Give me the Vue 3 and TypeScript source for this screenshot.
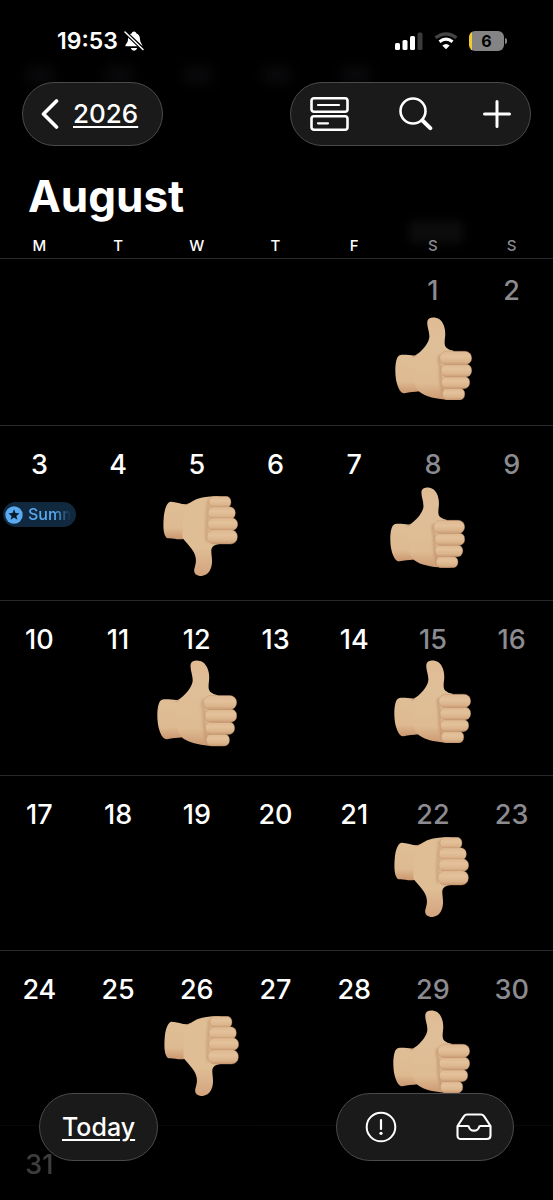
<script setup lang="ts">
interface Sticker {
  kind: 'up' | 'down'
  left: number
  top: number
  width: number
}

interface Day {
  date: number
  weekend: boolean
  event?: string
  sticker?: Sticker
}

const weekdays = ['M', 'T', 'W', 'T', 'F', 'S', 'S']

// Stickers are dropped freely on a day; offsets are relative to its cell.
const stickers: Record<number, Sticker> = {
  1: { kind: 'up', left: 1, top: 43, width: 77 },
  5: { kind: 'down', left: 6, top: 48, width: 75 },
  8: { kind: 'up', left: -4, top: 39, width: 75 },
  12: { kind: 'up', left: 0, top: 37, width: 80 },
  15: { kind: 'up', left: 0, top: 37, width: 77 },
  22: { kind: 'down', left: 0, top: 39, width: 75 },
  26: { kind: 'down', left: 7, top: 43, width: 75 },
  29: { kind: 'up', left: -1, top: 37, width: 77 },
}

const events: Record<number, string> = { 3: 'Summer' }

const firstColumn = 5
const daysInMonth = 31

const weeks: (Day | null)[][] = Array.from({ length: 6 }, (_, week) =>
  Array.from({ length: 7 }, (_, column) => {
    const date = week * 7 + column - firstColumn + 1
    if (date < 1 || date > daysInMonth) return null
    return { date, weekend: column > 4, event: events[date], sticker: stickers[date] }
  }),
)

function place(sticker: Sticker) {
  return {
    left: `${sticker.left}px`,
    top: `${sticker.top}px`,
    width: `${sticker.width}px`,
  }
}
</script>

<template>
  <div class="screen">
    <svg class="defs" aria-hidden="true">
      <defs>
        <linearGradient id="skin" x1="0.5" y1="0" x2="0.5" y2="1">
          <stop offset="0" stop-color="#e0bb94" />
          <stop offset="0.35" stop-color="#dfbf98" />
          <stop offset="0.8" stop-color="#debb92" />
          <stop offset="1" stop-color="#cc9a73" />
        </linearGradient>
        <linearGradient id="skin-down" x1="0.5" y1="0" x2="0.5" y2="1">
          <stop offset="0" stop-color="#dfbe96" />
          <stop offset="0.65" stop-color="#dfbd95" />
          <stop offset="1" stop-color="#d3a47e" />
        </linearGradient>
        <linearGradient id="finger" x1="0" y1="0" x2="0" y2="1">
          <stop offset="0" stop-color="#deb890" />
          <stop offset="0.4" stop-color="#e3c19a" />
          <stop offset="0.75" stop-color="#dbb48b" />
          <stop offset="1" stop-color="#c99a73" />
        </linearGradient>
        <linearGradient id="cuff" x1="0.5" y1="0" x2="0.5" y2="1">
          <stop offset="0" stop-color="#dfbe96" />
          <stop offset="0.7" stop-color="#deba91" />
          <stop offset="1" stop-color="#ca966f" />
        </linearGradient>
        <filter id="soft" x="-100%" y="-30%" width="300%" height="160%">
          <feGaussianBlur stdDeviation="4" />
        </filter>
      </defs>
      <symbol id="thumb-up" viewBox="44 35 232 251">
        <path
          d="M58 150C75 146 95 153 107 150L124 162V240L118 259C101 261 88 261 73 265C58 267 48 236 46 215C43 189 46 154 58 150Z"
          fill="url(#cuff)"
        />
        <path
          d="M104 152C124 139 143 118 147 99C150 81 138 62 142 46C146 34 166 34 178 42C192 53 197 74 195 94C193 112 192 121 199 128Q207 135 220 137L230 210V284H203C176 283 145 277 128 267Q112 260 105 240Q98 200 104 152Z"
          fill="url(#skin)"
        />
        <path
          d="M180 150Q173 162 180 180L182 230L190 272"
          fill="none" stroke="#b07a56" stroke-width="7" opacity="0.5" filter="url(#soft)"
        />
        <g fill="url(#finger)" stroke="#b98a64" stroke-width="1">
          <rect x="187" y="249" width="67" height="36" rx="16" />
          <rect x="184" y="214" width="85" height="37" rx="17" />
          <rect x="183" y="177" width="92" height="39" rx="18" />
          <rect x="179" y="138" width="96" height="41" rx="20" />
        </g>
        <path d="M97 156Q104 156 109 149" fill="none" stroke="#b98a64" stroke-width="2" />
      </symbol>
      <symbol id="thumb-down" viewBox="41 50 223 238">
        <path
          d="M63 67C78 66 100 77 115 74L122 90V160L104 177C85 182 68 173 54 176C42 168 41 142 43 116C45 89 53 68 63 67Z"
          fill="url(#cuff)"
        />
        <path
          d="M110 76C120 72 126 66 142 59C161 52 183 50 208 51V193Q188 196 185 208C183 220 189 238 186 254C183 275 172 287 154 288C139 288 132 280 134 267C139 249 142 239 134 220C126 202 108 188 99 174Q98 120 110 76Z"
          fill="url(#skin-down)"
        />
        <path
          d="M177 60L173 102L171 145L172 185"
          fill="none" stroke="#b07a56" stroke-width="7" opacity="0.5" filter="url(#soft)"
        />
        <g fill="url(#finger)" stroke="#b98a64" stroke-width="1">
          <rect x="178" y="51" width="65" height="34" rx="15" />
          <rect x="175" y="82" width="81" height="37" rx="17" />
          <rect x="174" y="115" width="89" height="38" rx="18" />
          <rect x="172" y="150" width="90" height="43" rx="20" />
        </g>
        <path d="M105 76Q111 77 118 72" fill="none" stroke="#b98a64" stroke-width="2" />
      </symbol>
    </svg>

    <header class="header">
      <div class="ghosts" aria-hidden="true">
        <span v-for="n in 5" :key="n" class="ghost"></span>
      </div>
      <span class="month-ghost" aria-hidden="true"></span>
      <div class="status">
        <div class="clock">
          <span>19:53</span>
          <svg class="bell" viewBox="0 0 20 20" aria-label="Silent">
            <path d="M10 0.5C11.2 0.5 12 1.3 12.2 2.3C15 3.3 16 5.8 16 8.6C16 11.8 18.4 13 18.4 15.2H1.4C1.4 13 4 11.8 4 8.6C4 5.8 5 3.3 7.8 2.3C8 1.3 8.8 0.5 10 0.5Z" fill="#fff" />
            <path d="M6.8 17H13.2Q12.4 19.7 10 19.7T6.8 17Z" fill="#fff" />
            <path d="M1 1L19.5 18.7" stroke="#000" stroke-width="3.8" />
            <path d="M1 1L19 18.5" stroke="#fff" stroke-width="1.5" stroke-linecap="round" />
          </svg>
        </div>
        <div class="indicators">
          <svg class="signal" viewBox="0 0 28 19" aria-label="Signal">
            <g fill="#fff">
              <rect x="0" y="11" width="5" height="7" rx="1.5" />
              <rect x="7.5" y="8" width="5" height="10" rx="1.5" />
              <rect x="15" y="4" width="5" height="14" rx="1.5" />
            </g>
            <rect x="22.5" y="0.5" width="5" height="17.5" rx="1.5" fill="#3a3a3a" />
          </svg>
          <svg class="wifi" viewBox="0 0 24 18" aria-label="Wi-Fi" fill="none">
            <path d="M1.5 5.8Q12 -2.2 22.5 5.8" stroke="#444" stroke-width="3.2" />
            <path d="M5.5 9.7Q12 4.7 18.5 9.7" stroke="#fff" stroke-width="3.2" />
            <path d="M12 17.2L8.3 13.4Q12 10.4 15.7 13.4Z" fill="#fff" />
          </svg>
          <div class="battery"><span class="level">6</span><span class="nub"></span></div>
        </div>
      </div>

      <nav class="toolbar">
        <button class="pill back" type="button">
          <svg class="chevron" viewBox="0 0 18 30" fill="none" aria-hidden="true">
            <path d="M15.5 2L2.5 15L15.5 28" stroke="#fff" stroke-width="3.6" stroke-linecap="round" stroke-linejoin="round" />
          </svg>
          <span class="underlined">2026</span>
        </button>
        <div class="pill actions">
          <button class="icon-button" type="button" aria-label="Change view">
            <svg class="view-icon" viewBox="0 0 39 34" fill="none" stroke="#fff" stroke-width="2.6" aria-hidden="true">
              <rect x="1.5" y="1.3" width="36" height="13.4" rx="2.5" />
              <rect x="1.5" y="19.3" width="36" height="13.4" rx="2.5" />
              <path d="M8 8H29M8 26.3H18" stroke-width="2.2" stroke-linecap="round" />
            </svg>
          </button>
          <button class="icon-button" type="button" aria-label="Search">
            <svg class="search-icon" viewBox="0 0 34 34" fill="none" stroke="#fff" aria-hidden="true">
              <circle cx="14" cy="14" r="12.5" stroke-width="2.6" />
              <path d="M23.5 23.5L31.3 31.2" stroke-width="4" stroke-linecap="round" />
            </svg>
          </button>
          <button class="icon-button" type="button" aria-label="Add event">
            <svg class="plus-icon" viewBox="0 0 28 28" fill="none" aria-hidden="true">
              <path d="M14 1.5V26.5M1.5 14H26.5" stroke="#fff" stroke-width="3" stroke-linecap="round" />
            </svg>
          </button>
        </div>
      </nav>

      <h1 class="title">August</h1>
      <div class="weekdays">
        <span v-for="(day, i) in weekdays" :key="i" :class="{ muted: i > 4 }">{{ day }}</span>
      </div>
    </header>

    <main class="calendar">
      <div v-for="(week, w) in weeks" :key="w" class="week">
        <div v-for="(day, d) in week" :key="d" class="day">
          <template v-if="day">
            <span class="date" :class="{ muted: day.weekend }">{{ day.date }}</span>
            <a v-if="day.event" class="event" href="#">
              <svg class="star" viewBox="0 0 18 18" aria-hidden="true">
                <circle cx="9" cy="9" r="8.7" fill="#5aaaf2" />
                <path d="M9 3.3L10.5 7.1L14.5 7.3L11.4 9.9L12.4 13.8L9 11.6L5.6 13.8L6.6 9.9L3.5 7.3L7.5 7.1Z" fill="#0a1c2c" />
              </svg>
              <span class="event-name">{{ day.event }}</span>
            </a>
            <svg
              v-if="day.sticker"
              class="sticker"
              :style="place(day.sticker)"
              :viewBox="day.sticker.kind === 'up' ? '0 0 232 251' : '0 0 223 238'"
              role="img"
              :aria-label="day.sticker.kind === 'up' ? 'Thumbs up' : 'Thumbs down'"
            >
              <use :href="`#thumb-${day.sticker.kind}`" />
            </svg>
          </template>
        </div>
      </div>
    </main>

    <footer class="footer">
      <button class="pill today" type="button"><span class="underlined">Today</span></button>
      <div class="pill inbox">
        <button class="icon-button" type="button" aria-label="Alerts">
          <svg class="alert-icon" viewBox="0 0 32 32" fill="none" stroke="#fff" aria-hidden="true">
            <circle cx="16" cy="16" r="14.3" stroke-width="2" />
            <path d="M16 9V18" stroke-width="2.2" stroke-linecap="round" />
            <circle cx="16" cy="22.3" r="1.6" fill="#fff" stroke="none" />
          </svg>
        </button>
        <button class="icon-button" type="button" aria-label="Inbox">
          <svg class="tray-icon" viewBox="0 0 36 28" fill="none" stroke="#fff" stroke-width="2.1" stroke-linejoin="round" aria-hidden="true">
            <path d="M1.5 13L8 3.2Q9.3 1.5 11 1.5H25Q26.7 1.5 28 3.2L34.5 13V22.5Q34.5 26 31 26H5Q1.5 26 1.5 22.5Z" />
            <path d="M1.5 13H11.5Q13 13 13 14.2Q14 17.6 18 17.6T23 14.2Q23 13 24.5 13H34.5" />
          </svg>
        </button>
      </div>
    </footer>
  </div>
</template>

<style>
body {
  background: #000;
}
</style>

<style scoped>
.screen {
  display: flex;
  flex-direction: column;
  height: 100vh;
  overflow: hidden;
  background: #000;
  color: #fff;
  font-family: Inter, "Liberation Sans", sans-serif;
}

.defs {
  position: absolute;
  width: 0;
  height: 0;
}

.header {
  position: relative;
  z-index: 0;
  flex: none;
}

.ghosts {
  position: absolute;
  z-index: -1;
  top: 66px;
  left: 0;
  right: 0;
  display: grid;
  grid-template-columns: repeat(7, 1fr);
  justify-items: center;
}

.ghost {
  width: 28px;
  height: 18px;
  background: #09090b;
  filter: blur(6px);
}

.month-ghost {
  position: absolute;
  z-index: -1;
  right: 90px;
  bottom: 15px;
  width: 54px;
  height: 22px;
  background: #0c0c0c;
  filter: blur(5px);
}

.status {
  display: flex;
  align-items: center;
  justify-content: space-between;
  height: 82px;
  padding: 0 46px 0 57px;
  box-sizing: border-box;
}

.clock {
  display: flex;
  align-items: center;
  gap: 6px;
  font-size: 23px;
  font-weight: 600;
  line-height: 28px;
}

.bell {
  width: 20px;
  height: 20px;
}

.indicators {
  display: flex;
  align-items: center;
  gap: 11px;
}

.signal {
  width: 28px;
  height: 19px;
}

.wifi {
  width: 24px;
  height: 18px;
}

.battery {
  position: relative;
  width: 35px;
  height: 20px;
  margin-right: 3px;
  border-radius: 6px;
  background: linear-gradient(to right, #f3cb2d 3px, #848484 3px);
  color: #000;
  font-size: 16px;
  font-weight: 700;
  line-height: 20px;
  text-align: center;
}

.nub {
  position: absolute;
  top: 7px;
  right: -3px;
  width: 2px;
  height: 6px;
  border-radius: 0 2px 2px 0;
  background: #848484;
}

.toolbar {
  display: flex;
  justify-content: space-between;
  padding: 0 22px;
}

.pill {
  display: flex;
  align-items: center;
  box-sizing: border-box;
  border: 1px solid #4a4a4c;
  border-radius: 34px;
  background: #1a1a1a;
  color: #fff;
  font-family: inherit;
  font-size: 26px;
  font-weight: 500;
  line-height: 32px;
}

.back {
  height: 64px;
  gap: 14px;
  padding: 0 24px 0 18px;
}

.chevron {
  width: 18px;
  height: 30px;
}

.underlined {
  text-decoration: underline;
  text-decoration-thickness: 2px;
  text-underline-offset: 3px;
}

.actions {
  width: 241px;
  height: 64px;
  justify-content: space-between;
  padding: 0 19px;
}

.icon-button {
  display: flex;
  padding: 0;
  border: 0;
  background: none;
}

.view-icon {
  width: 39px;
  height: 34px;
}

.search-icon {
  width: 34px;
  height: 34px;
}

.plus-icon {
  width: 28px;
  height: 28px;
}

.title {
  margin: 22px 0 0;
  padding-left: 28px;
  font-size: 44px;
  font-weight: 700;
  line-height: 56px;
}

.weekdays {
  display: grid;
  grid-template-columns: repeat(7, 1fr);
  padding: 12px 2px 2px 0;
  font-size: 15px;
  font-weight: 500;
  line-height: 20px;
  text-align: center;
}

.muted {
  color: #8b8b90;
}

.calendar {
  flex: 1;
  min-height: 0;
  overflow: hidden;
}

.week {
  display: grid;
  grid-template-columns: repeat(7, 1fr);
  box-sizing: border-box;
  height: 175px;
  padding: 22px 2px 0 0;
  border-top: 1px solid #29292b;
}

.week:first-child {
  height: 167px;
  padding-top: 15px;
}

.week:last-child {
  opacity: 0.24;
}

.day {
  position: relative;
  display: flex;
  flex-direction: column;
  align-items: center;
  min-width: 0;
}

.date {
  font-size: 27px;
  font-weight: 500;
  line-height: 34px;
}

.event {
  display: flex;
  align-items: center;
  align-self: stretch;
  gap: 5px;
  height: 25px;
  margin: 20px 3px 0;
  padding: 0 5px 0 2px;
  border-radius: 13px;
  background: #10293f;
  color: #5aaaf2;
  font-size: 16px;
  font-weight: 500;
  line-height: 25px;
  text-decoration: none;
}

.star {
  flex: none;
  width: 18px;
  height: 18px;
}

.event-name {
  flex: 1;
  min-width: 0;
  overflow: hidden;
  white-space: nowrap;
  mask-image: linear-gradient(to right, #000 60%, transparent);
}

.sticker {
  position: absolute;
  height: auto;
}

.footer {
  position: fixed;
  right: 39px;
  bottom: 39px;
  left: 39px;
  display: flex;
  justify-content: space-between;
}

.today {
  height: 68px;
  padding: 0 22px;
  font-size: 25px;
}

.inbox {
  width: 178px;
  height: 68px;
  justify-content: space-between;
  padding: 0 21px 0 28px;
}

.alert-icon {
  width: 32px;
  height: 32px;
}

.tray-icon {
  width: 36px;
  height: 28px;
}
</style>
